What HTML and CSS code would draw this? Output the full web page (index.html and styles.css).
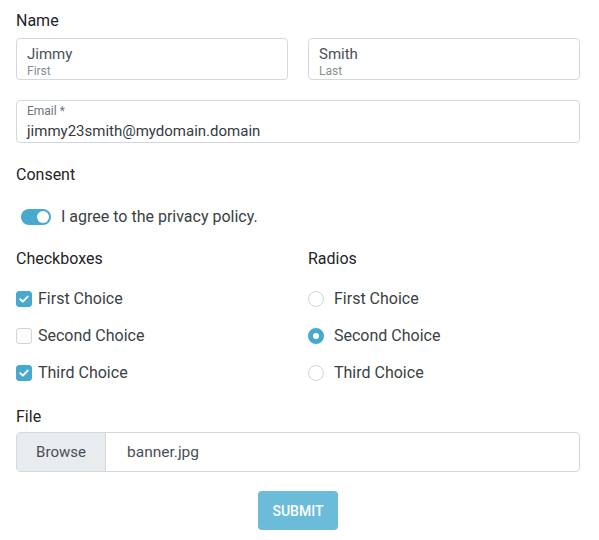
FILE: index.html
```html
<!DOCTYPE html>
<html>
<head>
<meta charset="utf-8">
<link rel="stylesheet" href="styles.css">
</head>
<body>
<form class="form">
  <div class="label label-name">Name</div>
  <div class="two-col">
    <div class="field">
      <div class="value">Jimmy</div>
      <div class="hint">First</div>
    </div>
    <div class="field">
      <div class="value">Smith</div>
      <div class="hint">Last</div>
    </div>
  </div>

  <div class="field field-email">
    <div class="float-label">Email *</div>
    <div class="value">jimmy23smith@mydomain.domain</div>
  </div>

  <div class="label label-consent">Consent</div>
  <div class="toggle-row">
    <span class="toggle"><span class="knob"></span></span>
    <span class="opt-text">I agree to the privacy policy.</span>
  </div>

  <div class="choices">
    <div class="col">
      <div class="label">Checkboxes</div>
      <div class="options">
        <div class="opt">
          <span class="check on"><svg viewBox="0 0 16 16" width="16" height="16"><path d="M4.3 8.2 L6.8 10.6 L11.7 5.6" fill="none" stroke="#fff" stroke-width="2" stroke-linecap="round" stroke-linejoin="round"/></svg></span>
          <span class="opt-text">First Choice</span>
        </div>
        <div class="opt">
          <span class="check"></span>
          <span class="opt-text">Second Choice</span>
        </div>
        <div class="opt">
          <span class="check on"><svg viewBox="0 0 16 16" width="16" height="16"><path d="M4.3 8.2 L6.8 10.6 L11.7 5.6" fill="none" stroke="#fff" stroke-width="2" stroke-linecap="round" stroke-linejoin="round"/></svg></span>
          <span class="opt-text">Third Choice</span>
        </div>
      </div>
    </div>
    <div class="col">
      <div class="label">Radios</div>
      <div class="options">
        <div class="opt radio-opt">
          <span class="radio"></span>
          <span class="opt-text">First Choice</span>
        </div>
        <div class="opt radio-opt">
          <span class="radio on"></span>
          <span class="opt-text">Second Choice</span>
        </div>
        <div class="opt radio-opt">
          <span class="radio"></span>
          <span class="opt-text">Third Choice</span>
        </div>
      </div>
    </div>
  </div>

  <div class="label label-file">File</div>
  <div class="file">
    <div class="browse">Browse</div>
    <div class="filename">banner.jpg</div>
  </div>

  <div class="actions">
    <button type="button" class="submit">SUBMIT</button>
  </div>
</form>
</body>
</html>
```

FILE: styles.css
```css
* { box-sizing: border-box; }

html, body {
  margin: 0;
  background: #fff;
}

body {
  font-family: Roboto, "Liberation Sans", Arial, sans-serif;
  color: #212529;
  padding: 9px 19px 0 16px;
}

.form {
  display: flex;
  flex-direction: column;
  width: 564px;
}

.label {
  font-size: 16px;
  line-height: 24px;
  font-weight: 400;
  color: #1f2326;
}

.label-name { margin-bottom: 5px; }

.two-col {
  display: grid;
  grid-template-columns: 1fr 1fr;
  gap: 20px;
}

.field {
  height: 42px;
  border: 1px solid #d3d8de;
  border-radius: 4px;
  padding: 5px 10px 0;
  display: flex;
  flex-direction: column;
}

.value {
  font-size: 15px;
  line-height: 20px;
  color: #495057;
}

.hint {
  font-size: 12px;
  line-height: 14px;
  color: #868e96;
}

.field-email {
  margin-top: 20px;
  height: 43px;
  padding-top: 3px;
}

.float-label {
  font-size: 12px;
  line-height: 14px;
  color: #6c757d;
  margin-bottom: 3px;
}

.field-email .value {
  color: #343a40;
}

.label-consent { margin-top: 20px; }

.toggle-row {
  margin-top: 18px;
  display: flex;
  align-items: center;
  height: 24px;
}

.toggle {
  width: 30px;
  height: 16px;
  border-radius: 8px;
  background: #47a9cd;
  margin-left: 5px;
  margin-right: 10px;
  display: flex;
  align-items: center;
  justify-content: flex-end;
  padding-right: 2px;
}

.knob {
  width: 12px;
  height: 12px;
  border-radius: 50%;
  background: #fff;
}

.opt-text {
  font-size: 16px;
  line-height: 24px;
  color: #3a3f44;
}

.choices {
  margin-top: 18px;
  display: grid;
  grid-template-columns: 1fr 1fr;
  gap: 20px;
}

.options {
  margin-top: 16px;
  display: flex;
  flex-direction: column;
  gap: 13px;
}

.opt {
  display: flex;
  align-items: center;
  height: 24px;
}

.check {
  width: 16px;
  height: 16px;
  border: 1px solid #cfd4da;
  border-radius: 3px;
  background: #fff;
  margin-right: 6px;
  display: flex;
  flex-shrink: 0;
}

.check.on {
  background: #47a9cd;
  border-color: #47a9cd;
}

.check svg { margin: -1px; }

.radio {
  width: 16px;
  height: 16px;
  border: 1px solid #cfd4da;
  border-radius: 50%;
  background: #fff;
  margin-right: 10px;
  flex-shrink: 0;
}

.radio.on {
  border: 5px solid #47a9cd;
}

.label-file { margin-top: 20px; }

.file {
  margin-top: 3px;
  height: 40px;
  border: 1px solid #d3d8de;
  border-radius: 4px;
  display: flex;
  overflow: hidden;
}

.browse {
  width: 89px;
  background: #e9ecef;
  border-right: 1px solid #d3d8de;
  display: flex;
  align-items: center;
  justify-content: center;
  font-size: 15px;
  color: #495057;
}

.filename {
  padding-left: 21px;
  display: flex;
  align-items: center;
  font-size: 15.5px;
  color: #495057;
}

.actions {
  margin-top: 19px;
  display: flex;
  justify-content: center;
}

.submit {
  width: 80px;
  height: 39px;
  border: none;
  border-radius: 4px;
  background: #6bbcd8;
  color: #fff;
  font-family: Roboto, "Liberation Sans", Arial, sans-serif;
  font-size: 14px;
  font-weight: 500;
  padding: 0;
}
```
